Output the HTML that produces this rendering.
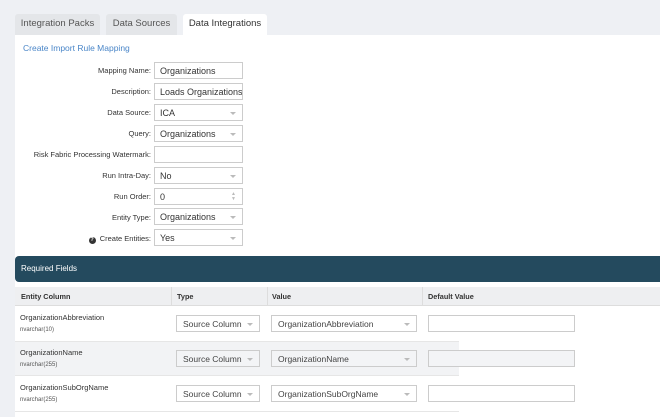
<!DOCTYPE html>
<html><head><style>
*{box-sizing:border-box;margin:0;padding:0}
body{width:660px;height:417px;overflow:hidden;background:#eef0f4;font-family:"Liberation Sans",sans-serif;position:relative;color:#333}
.tab{position:absolute;top:14px;height:21px;background:#e4e6e9;border-radius:3px 3px 0 0;font-size:9.5px;color:#555;text-align:center;line-height:20px}
.main{position:absolute;left:15px;top:35px;width:645px;height:382px;background:#fff}
.lbl{position:absolute;right:509px;font-size:7.5px;color:#333;text-align:right;white-space:nowrap}
.inp{position:absolute;left:154px;width:89px;height:17px;border:1px solid #ccc;font-size:9px;line-height:16px;padding-left:5px;background:#fff;white-space:nowrap;overflow:hidden}
.arr{position:absolute;right:6px;top:7px;width:0;height:0;border-left:3px solid transparent;border-right:3px solid transparent;border-top:3px solid #bbb}
.abs{position:absolute}
.sel{position:absolute;height:17px;border:1px solid #ccc;font-size:8.5px;line-height:16px;padding-left:6px;color:#444;background:#fff}
.sel.g{background:#f3f4f6}
.cell{position:absolute;font-size:7.5px;color:#333;line-height:11px}
.cell small{font-size:6px;color:#555}
</style></head><body>
<div class="tab" style="left:15px;width:85px">Integration Packs</div>
<div class="tab" style="left:106px;width:71px">Data Sources</div>
<div class="tab" style="left:183px;width:84px;background:#fff;color:#333">Data Integrations</div>
<div class="main"></div>
<div class="abs" style="left:23px;top:43px;font-size:8.5px;color:#4a86c8">Create Import Rule Mapping</div>

<div class="lbl" style="top:66px">Mapping Name:</div><div class="inp" style="top:62px">Organizations</div>
<div class="lbl" style="top:87px">Description:</div><div class="inp" style="top:83px">Loads Organizations in</div>
<div class="lbl" style="top:108px">Data Source:</div><div class="inp" style="top:104px">ICA<div class="arr"></div></div>
<div class="lbl" style="top:129px">Query:</div><div class="inp" style="top:125px">Organizations<div class="arr"></div></div>
<div class="lbl" style="top:150px">Risk Fabric Processing Watermark:</div><div class="inp" style="top:146px"></div>
<div class="lbl" style="top:171px">Run Intra-Day:</div><div class="inp" style="top:167px">No<div class="arr"></div></div>
<div class="lbl" style="top:192px">Run Order:</div><div class="inp" style="top:188px">0<div style="position:absolute;right:6px;top:3px;font-size:5px;color:#bbb;line-height:5px">▲<br>▼</div></div>
<div class="lbl" style="top:213px">Entity Type:</div><div class="inp" style="top:208px">Organizations<div class="arr"></div></div>
<div class="lbl" style="top:234px"><span style="display:inline-block;width:7px;height:7px;border-radius:50%;background:#333;color:#fff;font-size:5.5px;line-height:7px;text-align:center;font-weight:bold;vertical-align:0">?</span>&nbsp; Create Entities:</div><div class="inp" style="top:229px">Yes<div class="arr"></div></div>

<div class="abs" style="left:15px;top:256px;width:645px;height:26px;background:#244a5e;border-radius:4px 0 0 4px;color:#fff;font-size:8px;line-height:26px;padding-left:6px">Required Fields</div>
<div class="abs" style="left:15px;top:287px;width:645px;height:19px;background:#eeeff1;border-bottom:1px solid #ddd;font-size:7.3px;font-weight:bold;line-height:19px;color:#333">
<span class="abs" style="left:6px">Entity Column</span><span class="abs" style="left:156px;border-left:1px solid #ddd;padding-left:5px;height:19px">Type</span><span class="abs" style="left:252px;border-left:1px solid #ddd;padding-left:4px;height:19px">Value</span><span class="abs" style="left:407px;border-left:1px solid #ddd;padding-left:5px;height:19px">Default Value</span></div>

<div class="abs" style="left:15px;top:341px;width:444px;height:35px;background:#f2f3f5;border-top:1px solid #e6e6e6;border-bottom:1px solid #e6e6e6"></div>
<div class="abs" style="left:15px;top:411px;width:444px;height:1px;background:#e6e6e6"></div>

<div class="cell" style="left:20px;top:312px">OrganizationAbbreviation<br><small>nvarchar(10)</small></div>
<div class="sel" style="left:176px;top:315px;width:84px">Source Column<div class="arr"></div></div>
<div class="sel" style="left:271px;top:315px;width:146px">OrganizationAbbreviation<div class="arr"></div></div>
<div class="sel" style="left:428px;top:315px;width:147px"></div>

<div class="cell" style="left:20px;top:347px">OrganizationName<br><small>nvarchar(255)</small></div>
<div class="sel g" style="left:176px;top:350px;width:84px">Source Column<div class="arr"></div></div>
<div class="sel g" style="left:271px;top:350px;width:146px">OrganizationName<div class="arr"></div></div>
<div class="sel g" style="left:428px;top:350px;width:147px"></div>

<div class="cell" style="left:20px;top:382px">OrganizationSubOrgName<br><small>nvarchar(255)</small></div>
<div class="sel" style="left:176px;top:385px;width:84px">Source Column<div class="arr"></div></div>
<div class="sel" style="left:271px;top:385px;width:146px">OrganizationSubOrgName<div class="arr"></div></div>
<div class="sel" style="left:428px;top:385px;width:147px"></div>
</body></html>
